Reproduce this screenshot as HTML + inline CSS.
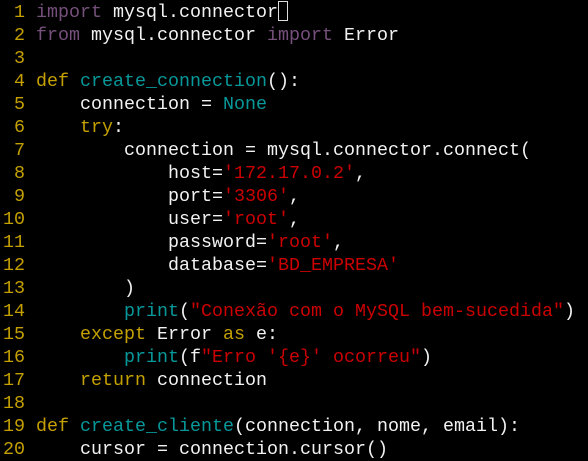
<!DOCTYPE html>
<html><head><meta charset="utf-8"><style>
html,body{margin:0;padding:0;background:#000;width:588px;height:461px;overflow:hidden}
pre{margin:0;position:absolute;left:3px;top:1px;font-family:"Liberation Mono",monospace;font-size:18.33px;line-height:23px;color:#f2f2f2}
.n{color:#c4a000}.k{color:#75507b}.y{color:#c4a000}.f{color:#06989a}.s{color:#cc0000}
.cur{display:inline-block;width:10px;height:20px;border:1px solid #ddd;vertical-align:-4px;box-sizing:border-box}
</style></head><body><pre><span class="n"> 1 </span><span class="k">import</span> mysql.connector<span class="cur"></span>
<span class="n"> 2 </span><span class="k">from</span> mysql.connector <span class="k">import</span> Error
<span class="n"> 3 </span>
<span class="n"> 4 </span><span class="y">def</span> <span class="f">create_connection</span>():
<span class="n"> 5 </span>    connection = <span class="f">None</span>
<span class="n"> 6 </span>    <span class="y">try</span>:
<span class="n"> 7 </span>        connection = mysql.connector.connect(
<span class="n"> 8 </span>            host=<span class="s">'172.17.0.2'</span>,
<span class="n"> 9 </span>            port=<span class="s">'3306'</span>,
<span class="n">10 </span>            user=<span class="s">'root'</span>,
<span class="n">11 </span>            password=<span class="s">'root'</span>,
<span class="n">12 </span>            database=<span class="s">'BD_EMPRESA'</span>
<span class="n">13 </span>        )
<span class="n">14 </span>        <span class="f">print</span>(<span class="s">"Conexão com o MySQL bem-sucedida"</span>)
<span class="n">15 </span>    <span class="y">except</span> Error <span class="y">as</span> e:
<span class="n">16 </span>        <span class="f">print</span>(f<span class="s">"Erro '{e}' ocorreu"</span>)
<span class="n">17 </span>    <span class="y">return</span> connection
<span class="n">18 </span>
<span class="n">19 </span><span class="y">def</span> <span class="f">create_cliente</span>(connection, nome, email):
<span class="n">20 </span>    cursor = connection.cursor()</pre></body></html>
